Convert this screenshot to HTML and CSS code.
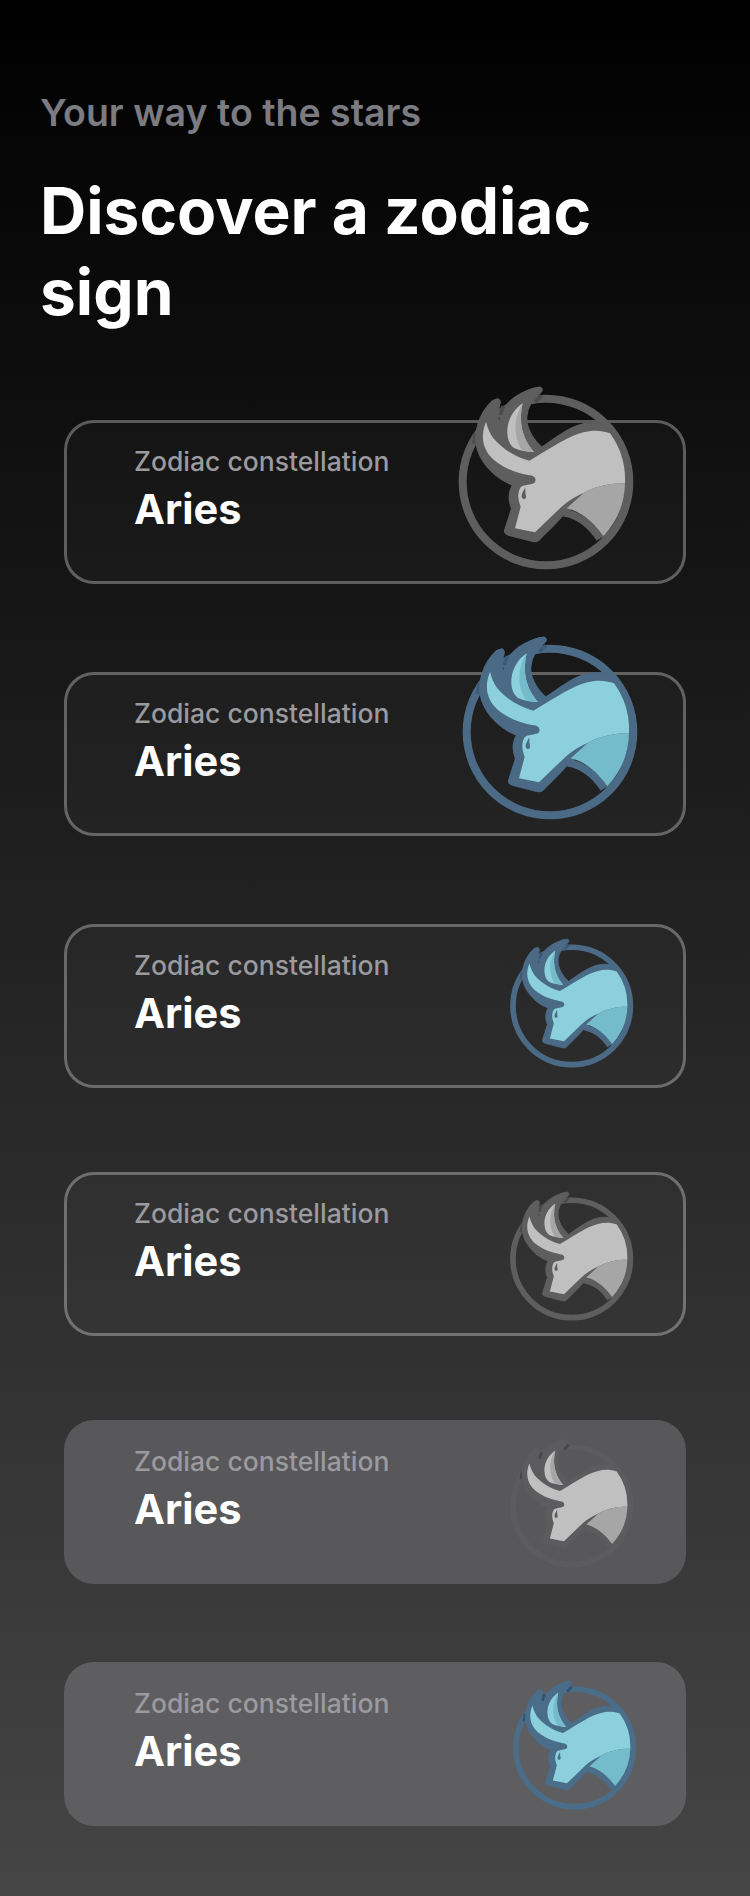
FILE: index.html
```html
<!DOCTYPE html>
<html lang="en">
<head>
  <meta charset="UTF-8">
  <title>Discover a zodiac sign</title>
  <link rel="stylesheet" href="styles.css">
</head>
<body>

<svg class="defs" width="0" height="0">
  <symbol id="bull" viewBox="0 0 660 660">
    <circle class="ring" cx="318" cy="336" r="250"/>
    <path class="shard" d="M101 222 L107 190 M286 96 L305 76"/>
    <path class="chord" d="M372 428 C415 435 450 460 480 506"/>
    <path class="outline" d="M168 88 C176 84 182 92 180 100 C172 125 172 145 178 165 C178 125 205 90 240 72 C258 62 278 54 295 52 C305 50 310 60 303 66 C280 85 262 110 260 140 C258 170 275 205 305 232 C345 205 385 172 430 162 C460 156 490 158 510 172 L560 300 L555 400 L490 505 L420 390 L365 440 C340 470 315 490 297 510 C290 516 282 516 275 513 L205 495 C195 492 192 485 195 478 L215 415 C205 395 205 365 218 345 C175 330 130 290 113 240 C98 195 115 130 158 92 Z"/>
    <path class="shard" d="M181 135 L190 108"/>
    <path class="light" d="M138 155 C124 190 124 225 150 258 C178 290 225 308 268 316 C285 316 292 330 282 340 C268 345 252 345 243 350 C233 365 232 385 242 410 L225 475 L285 487 L365 410 C385 392 408 378 432 368 C470 348 510 340 555 340 A238 238 0 0 0 510 190 C485 180 455 180 430 187 C385 198 340 230 268 272 C230 262 190 240 160 205 C150 190 143 175 138 155 Z"/>
    <path class="dark" d="M555 340 C510 340 470 348 432 368 L380 415 C420 425 455 450 490 498 A238 238 0 0 0 555 340 Z"/>
    <path class="light" d="M248 100 C218 120 200 155 202 190 C203 210 210 225 222 234 C240 242 260 246 282 246 C255 215 232 170 248 100 Z"/>
    <path class="dark" d="M248 100 C222 140 218 195 245 240 C258 245 270 246 282 246 C255 215 232 170 248 100 Z"/>
    <path class="eye" d="M256 352 C250 364 242 375 246 384 C252 390 260 386 258 378 C256 370 256 362 256 352 Z"/>
  </symbol>
</svg>

<main class="page">
  <p class="eyebrow">Your way to the stars</p>
  <h1 class="title">Discover a zodiac sign</h1>

  <div class="card card-one">
    <div class="card-label">Zodiac constellation</div>
    <div class="card-name">Aries</div>
    <svg class="logo logo-big grey"><use href="#bull"/></svg>
  </div>

  <div class="card card-two">
    <div class="card-label">Zodiac constellation</div>
    <div class="card-name">Aries</div>
    <svg class="logo logo-big teal logo-shift"><use href="#bull"/></svg>
  </div>

  <div class="card card-three">
    <div class="card-label">Zodiac constellation</div>
    <div class="card-name">Aries</div>
    <svg class="logo logo-small teal"><use href="#bull"/></svg>
  </div>

  <div class="card card-four">
    <div class="card-label">Zodiac constellation</div>
    <div class="card-name">Aries</div>
    <svg class="logo logo-small logo-down grey"><use href="#bull"/></svg>
  </div>

  <div class="card card-five filled">
    <div class="card-label">Zodiac constellation</div>
    <div class="card-name">Aries</div>
    <svg class="logo logo-small logo-low grey faint"><use href="#bull"/></svg>
  </div>

  <div class="card card-six filled">
    <div class="card-label">Zodiac constellation</div>
    <div class="card-name">Aries</div>
    <svg class="logo logo-small logo-low logo-shift-small teal soft"><use href="#bull"/></svg>
  </div>
</main>

</body>
</html>
```

FILE: styles.css
```css
body {
  margin: 0;
  font-family: Inter, "Noto Sans", sans-serif;
  color: #fff;
}
.defs {
  position: absolute;
}
.page {
  box-sizing: border-box;
  height: 1896px;
  padding: 93px 64px 0 40px;
  background: linear-gradient(180deg, #000 0%, #454545 100%);
}
.eyebrow {
  margin: 0;
  font-size: 37.5px;
  line-height: 40px;
  font-weight: 600;
  color: #7b7b82;
}
.title {
  margin: 37px 0 0;
  width: 600px;
  font-size: 64px;
  line-height: 81px;
  font-weight: 700;
}
.card {
  position: relative;
  box-sizing: border-box;
  margin-left: 24px;
  height: 164px;
  padding: 23px 0 0 67px;
  border: 3px solid rgba(255, 255, 255, 0.3);
  border-radius: 30px;
  background: rgba(255, 255, 255, 0.025);
}
.card-one { margin-top: 88px; }
.card-two { margin-top: 88px; }
.card-three { margin-top: 88px; }
.card-four { margin-top: 84px; }
.card-five { margin-top: 84px; }
.card-six { margin-top: 78px; }
.filled {
  border: 0;
  padding: 26px 0 0 70px;
  background: #58585a;
}
.card-six { background: #5e5e60; }
.card-label {
  font-size: 26.5px;
  line-height: 30px;
  font-weight: 500;
  color: #9a9a9f;
}
.card-name {
  margin-top: 7px;
  font-size: 41.5px;
  line-height: 52px;
  font-weight: 700;
}
.logo {
  position: absolute;
  overflow: visible;
  --line: #5e5e5e;
  --light: #c0c0c0;
  --dark: #a6a6a6;
  --shard: #4b4b4b;
}
.logo-big {
  width: 220px;
  height: 220px;
  top: -53px;
  left: 373px;
}
.logo-shift { top: -55px; left: 377px; }
.logo-small {
  width: 155px;
  height: 155px;
  top: 0;
  left: 430px;
}
.logo-down { top: 5px; }
.logo-low { top: 7px; left: 433px; }
.logo-shift-small { left: 436px; }
.teal {
  --line: #4a6a85;
  --light: #8bd0dc;
  --dark: #74bccb;
  --shard: #3c5a78;
}
.faint {
  --line: #5c5c5e;
  --shard: #454547;
}
.soft {
  --line: #4a6d8a;
  --shard: #2f5273;
}
.ring, .chord, .shard {
  fill: none;
}
.ring, .chord {
  stroke: var(--line);
  stroke-width: 24;
}
.faint .ring {
  stroke-width: 24;
}
.shard {
  stroke: var(--shard);
  stroke-width: 11;
}
.outline {
  fill: var(--line);
  stroke: var(--line);
  stroke-width: 4;
  stroke-linejoin: round;
}
.light { fill: var(--light); }
.dark { fill: var(--dark); }
.eye { fill: var(--line); }
```
